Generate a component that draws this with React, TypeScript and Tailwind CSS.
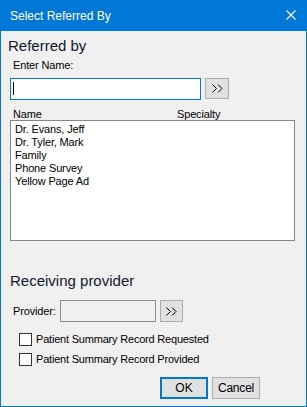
import React from "react";

const font = { fontFamily: '"Liberation Sans", Arial, sans-serif' };

function ArrowBtn({ className = "" }: { className?: string }) {
  return (
    <div className={`flex items-center justify-center border border-[#adadad] bg-[#e1e1e1] ${className}`}>
      <svg width="11" height="9" viewBox="0 0 11 9">
        <path d="M0.5 0.5 L4.5 4.5 L0.5 8.5 M6 0.5 L10 4.5 L6 8.5" fill="none" stroke="black" strokeWidth="1" />
      </svg>
    </div>
  );
}

function Check({ label }: { label: string }) {
  return (
    <div className="flex items-center">
      <div className="h-[13px] w-[13px] border border-[#333333] bg-white" />
      <span className="ml-[4px] text-[11px] leading-[13px] tracking-[-0.2px] text-black">{label}</span>
    </div>
  );
}

export default function App() {
  const items = ["Dr. Evans, Jeff", "Dr. Tyler, Mark", "Family", "Phone Survey", "Yellow Page Ad"];
  return (
    <div style={font} className="flex h-[407px] w-[307px] flex-col border border-t-0 border-[#0078d7] bg-[#f0f0f0]">
      {/* Title bar */}
      <div className="flex h-[31px] shrink-0 items-center justify-between bg-[#0078d7] pl-[9px] pr-[10px]">
        <span className="text-[12px] leading-[14px] text-white">Select Referred By</span>
        <svg width="10" height="10" viewBox="0 0 10 10" className="mt-[-1px]">
          <path d="M0.5 0.5 L9.5 9.5 M9.5 0.5 L0.5 9.5" stroke="white" strokeWidth="1.1" />
        </svg>
      </div>

      <div className="flex flex-col pl-[9px] pr-[10px] pt-[6px]">
        <div className="ml-[-2px] text-[15px] leading-[18px] text-[#101830]">Referred by</div>
        <div className="ml-[3px] mt-[4px] text-[11px] leading-[13px] tracking-[-0.15px] text-black">Enter Name:</div>
        <div className="mt-[6px] flex items-start">
          <div className="relative h-[22px] w-[191px] border border-[#0078d7] bg-white">
            <div className="absolute left-[2px] top-[3px] h-[13px] w-px bg-black" />
          </div>
          <ArrowBtn className="ml-[4px] h-[21px] w-[24px]" />
        </div>
        <div className="mt-[8px] flex text-[11px] leading-[12px] tracking-[-0.15px] text-black">
          <span className="ml-[3px] w-[164px]">Name</span>
          <span>Specialty</span>
        </div>
        <div className="h-[121px] w-[285px] border border-[#828790] bg-white pl-[4px] pt-[2px]">
          {items.map((it) => (
            <div key={it} className="text-[11px] leading-[13px] tracking-[-0.15px] text-black">
              {it}
            </div>
          ))}
        </div>

        <div className="mt-[31px] text-[15px] leading-[18px] text-[#101830]">Receiving provider</div>
        <div className="mt-[10px] flex items-center">
          <span className="ml-[3px] text-[11px] leading-[13px] tracking-[-0.15px] text-black">Provider:</span>
          <div className="ml-[4px] h-[22px] w-[96px] border border-[#8c8c8c] bg-[#f0f0f0]" />
          <ArrowBtn className="ml-[4px] h-[22px] w-[23px]" />
        </div>
        <div className="ml-[9px] mt-[11px] flex flex-col gap-[7px]">
          <Check label="Patient Summary Record Requested" />
          <Check label="Patient Summary Record Provided" />
        </div>
        <div className="mt-[11px] flex">
          <div className="ml-[150px] flex h-[22px] w-[48px] items-center justify-center border-2 border-[#0078d7] bg-[#e1e1e1] text-[12px] text-black">
            OK
          </div>
          <div className="ml-[4px] flex h-[22px] w-[48px] items-center justify-center border border-[#adadad] bg-[#e1e1e1] text-[12px] tracking-[-0.2px] text-black">
            Cancel
          </div>
        </div>
      </div>
    </div>
  );
}
